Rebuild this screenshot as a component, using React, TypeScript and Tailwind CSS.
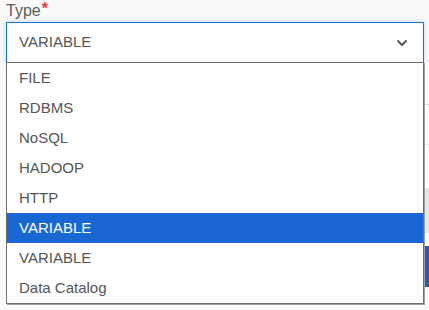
import { ChevronDown } from 'lucide-react';

const options = ['FILE', 'RDBMS', 'NoSQL', 'HADOOP', 'HTTP', 'VARIABLE', 'VARIABLE', 'Data Catalog'];
const selectedIndex = 5;

export default function App() {
  return (
    <div className="relative w-[429px] h-[310px] overflow-hidden bg-[#fafafa] font-['Liberation_Sans',Arial,sans-serif] text-[#555]">
      <div className="pl-[6px] pt-[1px]">
        <label className="block text-[16px] leading-[20px] text-[#5a5a5a]">
          Type<span className="relative top-[-2px] ml-[1px] text-[#e53935] text-[16px] leading-[20px] font-bold">*</span>
        </label>
        <div className="mt-[1px] mr-[5px] h-[41px] bg-white border border-[#1a6fd4] shadow-[0_0_6px_rgba(26,111,212,0.25)] flex items-center justify-between pl-[12px] pr-[13px]">
          <span className="text-[15px] text-[#555]">VARIABLE</span>
          <ChevronDown size={16} strokeWidth={2.8} className="text-[#555]" />
        </div>

        {/* form content behind the open list */}
        <div className="bg-white">
          <div className="h-[42px] border-b border-[#dcdcdc]" />
          <div className="h-[40px] border-b border-[#ececec]" />
          <div className="h-[43px]" />
          <div className="h-[45px] bg-[#e6e6e6]" />
          <div className="h-[13px]" />
          <div className="h-[41px] bg-[#2a5ea8]" />
        </div>
      </div>

      <ul className="absolute left-[6px] top-[62px] w-[418px] bg-white border border-[#707070] shadow-[1px_1px_0_#a0a0a0]">
        {options.map((opt, i) => (
          <li
            key={i}
            className={`h-[30px] flex items-center pl-[12px] text-[15px] ${
              i === selectedIndex ? 'bg-[#1967d2] text-white' : 'text-[#555]'
            }`}
          >
            {opt}
          </li>
        ))}
      </ul>
    </div>
  );
}
